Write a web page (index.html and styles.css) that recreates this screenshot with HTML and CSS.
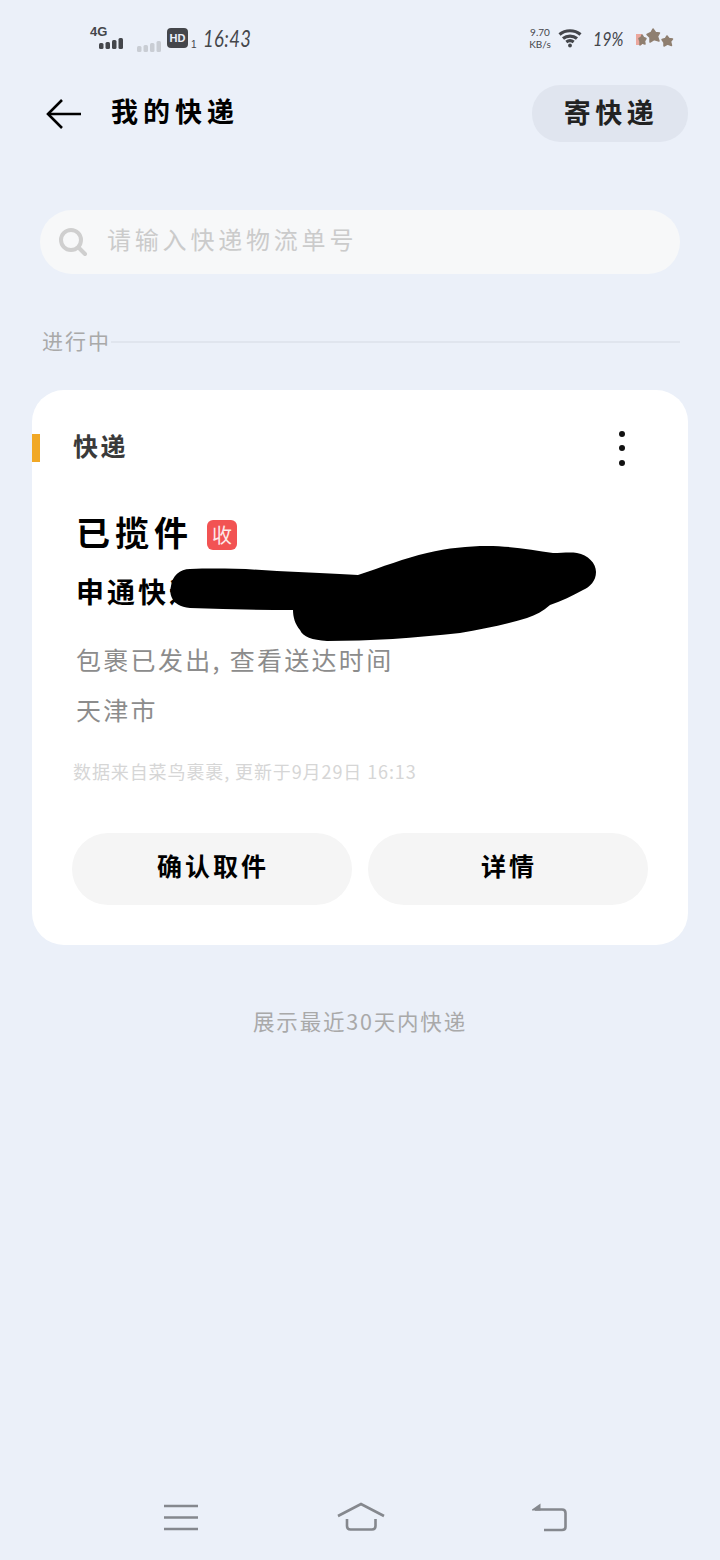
FILE: index.html
```html
<!DOCTYPE html>
<html lang="zh-CN">
<head>
    <meta charset="UTF-8">
    <meta name="viewport" content="width=device-width, initial-scale=1.0">
    <title>我的快递</title>
    <link rel="stylesheet" href="styles.css">
</head>
<body>
    <!-- Status bar -->
    <div class="status-bar">
        <div class="status-left">
            <div class="net-block">
                <span class="net-label">4G</span>
                <svg class="signal" width="24" height="11" viewBox="0 0 24 11"><g fill="#44464b"><rect x="0" y="5" width="4.500" height="6" rx="1.500"/><rect x="6.500" y="4" width="4.500" height="7" rx="1.500"/><rect x="13" y="2" width="4.500" height="9" rx="1.500"/><rect x="19.500" y="0" width="4.500" height="11" rx="1.500"/></g></svg>
            </div>
            <svg class="signal signal-off" width="24" height="11" viewBox="0 0 24 11"><g fill="#c9cdd4"><rect x="0" y="5" width="4.500" height="6" rx="1.500"/><rect x="6.500" y="4" width="4.500" height="7" rx="1.500"/><rect x="13" y="2" width="4.500" height="9" rx="1.500"/><rect x="19.500" y="0" width="4.500" height="11" rx="1.500"/></g></svg>
            <span class="hd-badge">HD</span>
            <span class="sim-no">1</span>
            <span class="clock">16:43</span>
        </div>
        <div class="status-right">
            <div class="speed"><span>9.70</span><span>KB/s</span></div>
            <svg class="wifi" width="24" height="20" viewBox="0 0 24 20" fill="none" stroke="#44464b" stroke-width="3.200"><path d="M1.500 6.500C7.500 1.500 16.500 1.500 22.500 6.500"/><path d="M5 10.500C9 7.200 15 7.200 19 10.500"/><path d="M8.300 14C10.500 12.400 13.500 12.400 15.700 14"/><circle cx="12" cy="17.500" r="1.900" fill="#44464b" stroke="none"/></svg>
            <span class="battery">19%</span>
            <svg class="stars" width="40" height="22" viewBox="0 0 40 22"><rect x="1" y="7" width="6" height="11" fill="#eba79d"/><g fill="#8f7f70" stroke="#8f7f70" stroke-width="1.500" stroke-linejoin="round"><polygon points="7,8 8.500,10.500 11,11.500 9.500,14 10,17 7,16 5,18 5,14.500 4,11.500 6,10.500"/><polygon points="18,2 20.500,5.500 24.500,6 22.500,9.500 24,14 19,12.500 15,15 15,10.500 12,7.500 16,5.500"/><polygon points="32,9 34,11.500 37.500,12 35.500,14.500 36.500,18.500 32.500,17 29,19 29,15.500 27,12.500 30.500,11.500"/></g></svg>
        </div>
    </div>

    <!-- Header -->
    <div class="top-bar">
        <svg class="back-arrow" width="36" height="32" viewBox="0 0 36 32" fill="none" stroke="#000" stroke-width="2.600"><path d="M35 16H2"/><path d="M16 2L2 16L16 30"/></svg>
        <div class="page-title">我的快递</div>
        <div class="send-button">寄快递</div>
    </div>

    <!-- Search -->
    <div class="search-box">
        <svg class="search-icon" width="30" height="30" viewBox="0 0 30 30" fill="none" stroke="#cfcfcf" stroke-width="4"><circle cx="13" cy="13" r="10"/><path d="M20.500 20.500L27 27" stroke-linecap="round"/></svg>
        <span class="search-placeholder">请输入快递物流单号</span>
    </div>

    <!-- Section label -->
    <div class="section-label">
        <span class="section-text">进行中</span>
        <div class="section-line"></div>
    </div>

    <!-- Parcel card -->
    <div class="card">
        <div class="card-head">
            <div class="accent-bar"></div>
            <div class="card-type">快递</div>
            <div class="more-dots"><i></i><i></i><i></i></div>
        </div>
        <div class="card-body">
            <div class="status-row">
                <span class="parcel-status">已揽件</span>
                <span class="parcel-badge">收</span>
            </div>
            <div class="courier">申通快递</div>
            <div class="parcel-info">包裹已发出, 查看送达时间</div>
            <div class="parcel-info">天津市</div>
            <div class="data-source">数据来自菜鸟裹裹, 更新于9月29日 16:13</div>
        </div>
        <div class="card-actions">
            <div class="action-button">确认取件</div>
            <div class="action-button">详情</div>
        </div>
        <!-- Scribble over the tracking number -->
        <svg class="scribble" width="430" height="98" viewBox="168 545 430 98"><path d="M190 569C220 568 250 569 277 571C305 572 335 574 358 575C382 567 405 558 427 553C448 548 468 546 487 546C512 546 533 550 553 553C562 553 570 552 577 553C588 555 596 563 596 572C596 581 590 587 583 590C572 596 562 601 550 605C543 611 536 615 527 618C505 625 483 629 460 633C415 638 370 641 327 641C312 640 303 637 300 630C295 624 293 617 293 610C258 610 224 609 190 608C180 607 174 603 172 598C170 594 170 590 171 586C172 576 180 569 190 569Z" fill="#000"/></svg>
    </div>

    <div class="range-note">展示最近30天内快递</div>

    <!-- Bottom navigation -->
    <div class="nav-bar">
        <svg width="34" height="35" viewBox="0 0 34 35" fill="none" stroke="#85888e" stroke-width="2.600"><path d="M0 6H34"/><path d="M0 17.500H34"/><path d="M0 29H34"/></svg>
        <svg width="48" height="35" viewBox="0 0 48 35" fill="none" stroke="#85888e" stroke-width="2.600"><path d="M1 16L24 4L47 16"/><path d="M10 19V26Q10 29.500 13.500 29.500H35Q38.500 29.500 38.500 26V19"/></svg>
        <svg class="nav-back" width="36" height="35" viewBox="0 0 36 35" fill="none" stroke="#85888e" stroke-width="2.600"><path d="M4 9.500H31Q34.500 9.500 34.500 13V27Q34.500 30 31 30H13"/><path d="M1 9.500L9.500 3.500V10.500H1Z" fill="#85888e" stroke="none"/></svg>
    </div>
</body>
</html>
```

FILE: styles.css
```css
body {
    font-family: "Noto Sans CJK SC", "Noto Sans", sans-serif;
    background-color: #ebf0f9;
    margin: 0;
    padding: 0;
    height: 1560px;
    display: flex;
    flex-direction: column;
    color: #000;
    overflow: hidden;
}

/* Status bar */
.status-bar {
    height: 76px;
    display: flex;
    justify-content: space-between;
    align-items: center;
    padding: 0 45px 0 90px;
    color: #44464b;
    flex-shrink: 0;
}

.status-left,
.status-right {
    display: flex;
    align-items: center;
}

.net-block {
    display: flex;
    flex-direction: column;
    width: 33px;
    height: 24px;
}

.net-label {
    font-family: "Liberation Sans", sans-serif;
    font-size: 13px;
    font-weight: bold;
    line-height: 12px;
}

.signal {
    align-self: flex-end;
    display: block;
}

.signal-off {
    margin: 11px 0 0 14px;
}

.hd-badge {
    width: 21px;
    height: 20px;
    margin-left: 6px;
    background-color: #44464b;
    border-radius: 4px;
    color: #ebf0f9;
    font-family: "Liberation Sans", sans-serif;
    font-size: 11px;
    font-weight: bold;
    line-height: 20px;
    text-align: center;
}

.sim-no {
    font-family: "Liberation Sans", sans-serif;
    font-size: 10px;
    margin: 12px 0 0 3px;
    width: 6px;
}

.clock {
    font-family: Lato, sans-serif;
    font-style: italic;
    font-size: 23px;
    letter-spacing: 0.500px;
    margin-left: 6px;
    transform: scaleX(0.8);
    transform-origin: left center;
}

.speed {
    display: flex;
    flex-direction: column;
    align-items: center;
    font-family: Lato, sans-serif;
    font-size: 10px;
    line-height: 12px;
    width: 20px;
}

.wifi {
    margin-left: 8px;
}

.battery {
    font-family: Lato, sans-serif;
    font-style: italic;
    font-size: 20px;
    margin-left: 11px;
    width: 31px;
    transform: scaleX(0.8);
    transform-origin: left center;
}

.stars {
    margin-left: 11px;
}

/* Header */
.top-bar {
    display: flex;
    align-items: center;
    height: 57px;
    margin-top: 9px;
    padding: 0 32px 0 46px;
    flex-shrink: 0;
}

.page-title {
    margin-left: 29px;
    padding-bottom: 6px;
    font-size: 27px;
    font-weight: bold;
    letter-spacing: 5px;
}

.send-button {
    margin-left: auto;
    width: 154px;
    height: 57px;
    padding-left: 2px;
    background-color: #e0e5ef;
    border-radius: 28px;
    font-size: 27px;
    font-weight: bold;
    color: #222;
    letter-spacing: 4.500px;
    line-height: 53px;
    text-align: center;
}

/* Search */
.search-box {
    display: flex;
    align-items: center;
    height: 64px;
    margin: 68px 40px 0;
    padding-left: 18px;
    background-color: #f7f8f9;
    border-radius: 32px;
    flex-shrink: 0;
}

.search-placeholder {
    margin-left: 19px;
    padding-bottom: 7px;
    font-size: 24px;
    letter-spacing: 3.800px;
    color: #cbcbcb;
}

/* Section label */
.section-label {
    display: flex;
    align-items: center;
    height: 24px;
    margin: 56px 40px 0 42px;
    font-size: 21px;
    letter-spacing: 2px;
    color: #a9a9a9;
    flex-shrink: 0;
}

.section-text {
    padding-bottom: 5px;
}

.section-line {
    flex: 1;
    height: 2px;
    background-color: #e0e5ee;
}

/* Card */
.card {
    position: relative;
    margin: 36px 32px 0;
    padding: 44px 0 40px;
    background-color: #fff;
    border-radius: 32px;
    flex-shrink: 0;
}

.card-head {
    display: flex;
    align-items: center;
    height: 28px;
    padding-right: 63px;
}

.accent-bar {
    width: 8px;
    height: 28px;
    background-color: #f1a826;
}

.card-type {
    margin-left: 33px;
    padding-bottom: 6px;
    font-size: 25px;
    letter-spacing: 2.500px;
    font-weight: bold;
    color: #3a3a3a;
}

.more-dots {
    margin-left: auto;
    display: flex;
    flex-direction: column;
    gap: 8.500px;
}

.more-dots i {
    display: block;
    width: 6px;
    height: 6px;
    border-radius: 50%;
    background-color: #111;
}

.card-body {
    padding: 52px 40px 0 44px;
}

.status-row {
    display: flex;
    align-items: center;
    height: 38px;
}

.parcel-status {
    padding-bottom: 4px;
    font-size: 34px;
    font-weight: bold;
    letter-spacing: 5px;
}

.parcel-badge {
    width: 30px;
    height: 30px;
    margin: 4px 0 0 14px;
    background-color: #f25353;
    border-radius: 6px;
    color: #fde9e9;
    font-size: 20px;
    line-height: 30px;
    text-align: center;
}

.courier {
    margin-top: 21px;
    font-size: 28px;
    font-weight: bold;
    letter-spacing: 3px;
    line-height: 36px;
}

.parcel-info {
    font-size: 25px;
    letter-spacing: 2.300px;
    line-height: 50px;
    color: #8c8c8c;
}

.courier + .parcel-info {
    margin-top: 25px;
}

.data-source {
    margin: 25px 0 0 -3px;
    font-size: 18px;
    line-height: 24px;
    letter-spacing: 0.900px;
    color: #d6d6d6;
}

.card-actions {
    display: flex;
    gap: 16px;
    margin-top: 50px;
    padding: 0 40px;
}

.action-button {
    flex: 1;
    height: 72px;
    padding-left: 2px;
    background-color: #f5f5f5;
    border-radius: 36px;
    font-size: 25px;
    font-weight: bold;
    letter-spacing: 3px;
    line-height: 65px;
    text-align: center;
}

.scribble {
    position: absolute;
    left: 136px;
    top: 155px;
}

.range-note {
    margin-top: 64px;
    font-size: 21.500px;
    line-height: 24px;
    letter-spacing: 1.800px;
    text-align: center;
    color: #a9a9a9;
    flex-shrink: 0;
}

/* Bottom navigation */
.nav-bar {
    display: flex;
    gap: 139px;
    margin-top: auto;
    padding: 0 0 25px 164px;
    flex-shrink: 0;
}

.nav-back {
    margin-left: 7px;
}
```
